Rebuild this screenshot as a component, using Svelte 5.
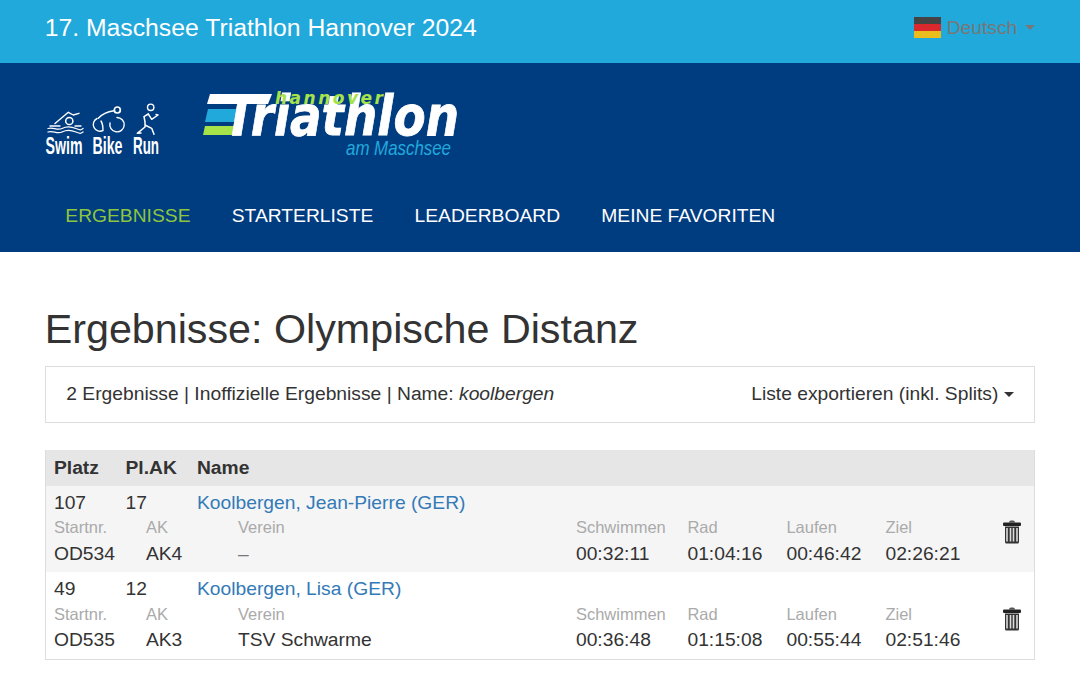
<script>
    // Results page for the triathlon event
    const navItems = [
        { label: "ERGEBNISSE", active: true },
        { label: "STARTERLISTE" },
        { label: "LEADERBOARD" },
        { label: "MEINE FAVORITEN" },
    ];

    const results = [
        {
            place: "107",
            placeAk: "17",
            name: "Koolbergen, Jean-Pierre (GER)",
            bib: "OD534",
            ak: "AK4",
            club: "–",
            swim: "00:32:11",
            bike: "01:04:16",
            run: "00:46:42",
            finish: "02:26:21",
        },
        {
            place: "49",
            placeAk: "12",
            name: "Koolbergen, Lisa (GER)",
            bib: "OD535",
            ak: "AK3",
            club: "TSV Schwarme",
            swim: "00:36:48",
            bike: "01:15:08",
            run: "00:55:44",
            finish: "02:51:46",
        },
    ];
</script>

<div class="topbar">
    <div class="event">17. Maschsee Triathlon Hannover 2024</div>
    <div class="lang">
        <span class="flag"><i class="black"></i><i class="red"></i><i class="gold"></i></span>
        <span>Deutsch</span>
        <span class="caret lang-caret"></span>
    </div>
</div>

<header class="header">
    <div class="logos">
        <svg class="sbr" width="116" height="60" viewBox="0 0 116 60">
            <g fill="none" stroke="#fff" stroke-linecap="round" stroke-linejoin="round">
                <!-- swimmer -->
                <path d="M10 23.5 L23.3 12.3 L28.3 15 L34 13.3" stroke-width="1.4" />
                <circle cx="24.3" cy="21" r="3.6" stroke-width="1.5" />
                <path d="M5 26 H15 M30 26 H36" stroke-width="1.3" />
                <path d="M3 28.5 C8 26.5 12 31 17 28.5 S26 26.5 31 28.5 S36 30 38 28.5" stroke-width="1.3" />
                <path d="M3 32 C8 30 12 34.5 17 32 S26 30 31 32 S36 33.5 38 32" stroke-width="1.3" />
                <!-- cyclist -->
                <circle cx="72.3" cy="10" r="3" stroke-width="1.7" />
                <path d="M69 10.7 C63 11.5 57 14 53.3 18.3" stroke-width="1.4" />
                <path d="M52 18.5 A6.7 6.7 0 1 0 58 30.5 M56 21 C58 24 58 27 58 30.5" stroke-width="1.4" />
                <path d="M72 17.5 A7.2 7.2 0 1 1 65 23" stroke-width="1.4" />
                <!-- runner -->
                <circle cx="105.7" cy="7.3" r="3.2" stroke-width="1.4" />
                <path d="M103.3 14 L99 16.7 L100 22 L100 27 L92.3 33.3 L96 33 M100 25 L106.7 28.3 L109 34.3" stroke-width="1.5" />
                <path d="M103.3 14 L106.7 19.3 L113 15 M111 14.5 L113 15" stroke-width="1.4" />
            </g>
            <g class="sbr-text" fill="#fff">
                <text x="0.5" y="54" textLength="37" lengthAdjust="spacingAndGlyphs">Swim</text>
                <text x="47.5" y="54" textLength="30" lengthAdjust="spacingAndGlyphs">Bike</text>
                <text x="88" y="54" textLength="26" lengthAdjust="spacingAndGlyphs">Run</text>
            </g>
        </svg>
        <svg class="brand" width="262" height="70" viewBox="0 0 262 70">
            <polygon points="8,3 70,3 66,13 5,13" fill="#fff" />
            <polygon points="6,18 42,18 39,31 3,31" fill="#22a9dc" />
            <polygon points="3,35 38,35 36,44 1,44" fill="#a6e34a" />
            <text class="logo-main" x="22" y="44" textLength="235" lengthAdjust="spacingAndGlyphs" fill="#fff" stroke="#fff" stroke-width="0.8">Triathlon</text>
            <text class="logo-top" x="73" y="13" textLength="108" lengthAdjust="spacing" fill="#a6e34a">hannover</text>
            <text class="logo-sub" x="144" y="64" textLength="105" lengthAdjust="spacingAndGlyphs" fill="#22a9dc">am Maschsee</text>
        </svg>
    </div>
    <nav class="nav">
        {#each navItems as item}
            <a href="#top" class:active={item.active}>{item.label}</a>
        {/each}
    </nav>
</header>

<main class="content">
    <h1>Ergebnisse: Olympische Distanz</h1>

    <div class="panel">
        <div>2 Ergebnisse | Inoffizielle Ergebnisse | Name: <em>koolbergen</em></div>
        <div class="export">Liste exportieren (inkl. Splits) <span class="caret export-caret"></span></div>
    </div>

    <div class="table">
        <div class="row-top head">
            <div>Platz</div>
            <div>Pl.AK</div>
            <div>Name</div>
        </div>
        {#each results as r, i}
            <div class="result" class:odd={i % 2 === 0}>
                <div class="row-top">
                    <div>{r.place}</div>
                    <div>{r.placeAk}</div>
                    <div><a href="#top">{r.name}</a></div>
                </div>
                <div class="row-sub labels">
                    <div>Startnr.</div>
                    <div>AK</div>
                    <div>Verein</div>
                    <div>Schwimmen</div>
                    <div>Rad</div>
                    <div>Laufen</div>
                    <div>Ziel</div>
                </div>
                <div class="row-sub values">
                    <div>{r.bib}</div>
                    <div>{r.ak}</div>
                    <div class:muted={r.club === "–"}>{r.club}</div>
                    <div>{r.swim}</div>
                    <div>{r.bike}</div>
                    <div>{r.run}</div>
                    <div>{r.finish}</div>
                </div>
                <svg class="trash" width="18" height="24" viewBox="0 0 18 24">
                    <path d="M6 2.5 Q6 0.5 8 0.5 H10 Q12 0.5 12 2.5 Z" fill="#555" />
                    <rect x="0" y="2.5" width="18" height="3.5" rx="1" fill="#222" />
                    <path d="M2 6.5 H16 V22 Q16 23.5 14.5 23.5 H3.5 Q2 23.5 2 22 Z" fill="#333" />
                    <path d="M4 8 V21.5 M7.5 8 V21.5 M10.5 8 V21.5 M14 8 V21.5" stroke="#ddd" stroke-width="1.6" />
                </svg>
            </div>
        {/each}
    </div>
</main>

<style>
    :global(body) {
        font-family: "Liberation Sans", Arial, sans-serif;
        font-size: 19.25px;
        line-height: 1.42857;
        color: #333;
        background: #fff;
    }

    a {
        text-decoration: none;
    }

    .topbar {
        height: 63px;
        background: #22a9dc;
        padding: 0 44.69px;
        display: flex;
        justify-content: space-between;
        align-items: center;
    }

    .event {
        color: #fff;
        font-size: 24.75px;
        padding-bottom: 7px;
    }

    .lang {
        display: flex;
        align-items: center;
        color: #777;
        padding-bottom: 7px;
    }

    .flag {
        width: 27px;
        height: 21px;
        margin-right: 6px;
        display: flex;
        flex-direction: column;
    }

    .flag i {
        flex: 1;
    }

    .black {
        background: #444;
    }

    .red {
        background: #d9292c;
    }

    .gold {
        background: #eabd1c;
    }

    .caret {
        display: inline-block;
        width: 0;
        height: 0;
        vertical-align: middle;
        border-top: 5px solid;
        border-right: 5px solid transparent;
        border-left: 5px solid transparent;
    }

    .export-caret {
        margin-left: 0;
    }

    .lang-caret {
        margin-left: 8px;
    }

    .header {
        height: 189px;
        background: #003c80;
        padding: 0 44.69px;
    }

    .logos {
        height: 116px;
        display: flex;
        gap: 41px;
        align-items: flex-start;
    }

    .sbr {
        margin-top: 37px;
        flex: none;
    }

    .sbr-text {
        font-family: "Liberation Sans", sans-serif;
        font-size: 24px;
        font-weight: 700;
    }

    .brand {
        margin-top: 28px;
        flex: none;
    }

    .logo-main {
        font-family: "DejaVu Sans", sans-serif;
        font-size: 56px;
        font-weight: 700;
        font-style: italic;
    }

    .logo-top {
        font-family: "DejaVu Sans", sans-serif;
        font-size: 17px;
        font-weight: 700;
        font-style: italic;
    }

    .logo-sub {
        font-family: "Liberation Sans", sans-serif;
        font-size: 21px;
        font-style: italic;
    }

    .nav {
        display: flex;
        gap: 41.25px;
        padding-left: 20.625px;
        padding-top: 23px;
    }

    .nav a {
        color: #fff;
    }

    .nav a.active {
        color: #8cc63f;
    }

    .content {
        padding: 0 44.69px;
    }

    h1 {
        margin: 54px 0 14px;
        font-size: 41.25px;
        font-weight: 500;
        line-height: 46px;
        height: 46px;
    }

    .panel {
        border: 1px solid #ddd;
        height: 53px;
        padding: 0 20.625px 2px;
        display: flex;
        justify-content: space-between;
        align-items: center;
    }

    .table {
        margin-top: 27px;
        border: 1px solid #ddd;
        border-top: 0;
    }

    .head {
        height: 36px;
        background: #e6e6e6;
        font-weight: 700;
        align-items: center;
    }

    .row-top {
        display: grid;
        grid-template-columns: 71.5px 71.5px 1fr;
        padding-left: 8.25px;
    }

    .result {
        position: relative;
        height: 86px;
        padding-top: 3px;
        box-sizing: border-box;
    }

    .result + .result {
        height: 87px;
    }

    .result + .result .labels {
        margin-top: 0.5px;
    }

    .result + .result .trash {
        top: 35px;
    }

    .result.odd {
        background: #f5f5f5;
    }

    .result a {
        color: #337ab7;
    }

    .row-sub {
        display: grid;
        grid-template-columns: 92px 92px 338px 111.5px 99px 99px 1fr;
        padding-left: 8.25px;
    }

    .labels {
        color: #aaa;
        font-size: 16.5px;
        margin-top: -0.5px;
    }

    .values {
        margin-top: 0;
    }

    .result + .result .values {
        margin-top: -0.5px;
    }

    .muted {
        color: #777;
    }

    .trash {
        position: absolute;
        right: 13px;
        top: 34px;
    }
</style>
